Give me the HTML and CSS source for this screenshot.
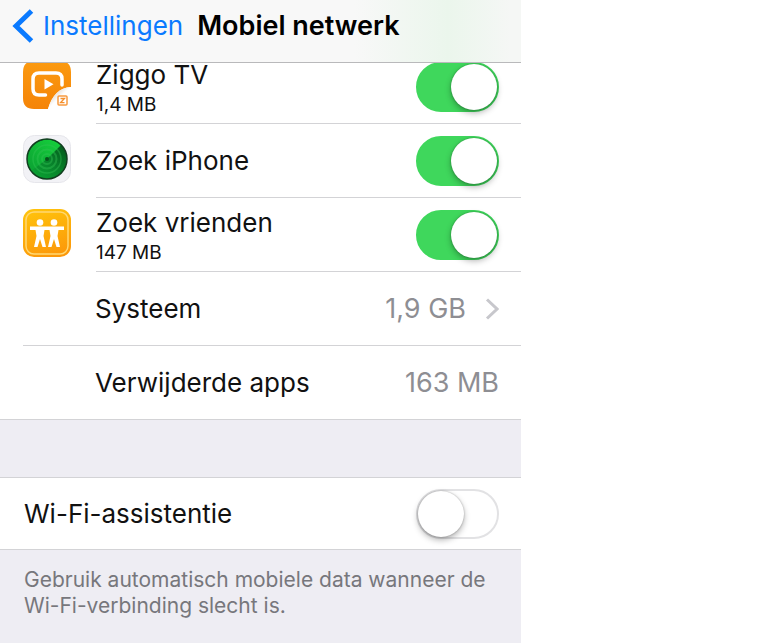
FILE: index.html
```html
<!DOCTYPE html>
<html lang="nl">
<head>
    <meta charset="UTF-8">
    <title>Mobiel netwerk</title>
    <meta name="viewport" content="width=device-width, initial-scale=1.0">
    <link rel="stylesheet" href="styles.css">
</head>
<body>
    <div class="screen">
        <header class="navbar">
            <a class="back" href="#">
                <svg class="back-icon" width="22" height="36" viewBox="0 0 22 36">
                    <path d="M19.500 3L4 18l15.500 15" fill="none" stroke="#0a7aff" stroke-width="5"/>
                </svg>
                Instellingen
            </a>
            <h1>Mobiel netwerk</h1>
        </header>
        <main>
            <ul class="list apps">
                <li class="row">
                    <svg class="icon" width="48" height="48" viewBox="0 0 48 48">
                        <defs>
                            <linearGradient id="ziggo" x1="0" y1="0" x2="0" y2="1">
                                <stop offset="0" stop-color="#fb9a10"/>
                                <stop offset="1" stop-color="#f58408"/>
                            </linearGradient>
                            <linearGradient id="fold" x1="0.200" y1="0.200" x2="0.700" y2="0.700">
                                <stop offset="0" stop-color="#d9cfc6"/>
                                <stop offset="0.600" stop-color="#fff"/>
                            </linearGradient>
                        </defs>
                        <path d="M11 0h26q11 0 11 11v15Q31 27 25 48H11Q0 48 0 37V11Q0 0 11 0z" fill="url(#ziggo)"/>
                        <path d="M48 26Q31 27 25 48h11q12 0 12-12z" fill="url(#fold)"/>
                        <path d="M22.500 34H16q-6 0-6-6V18q0-6 6-6h17q6 0 6 6v6" fill="none" stroke="#fff" stroke-width="3.500" stroke-linecap="round"/>
                        <path d="M21.500 18v10.500l9-5.200z" fill="#fff"/>
                        <rect x="35" y="35" width="9" height="9" rx="1" fill="#fff" stroke="#f79a40" stroke-width="1.500"/>
                        <path d="M37.500 37.500h4l-4 4.200h4" fill="none" stroke="#f58f2c" stroke-width="1.300"/>
                    </svg>
                    <div class="line">
                        <label class="text double" for="ziggo-tv">Ziggo TV<small>1,4 MB</small></label>
                        <input class="switch" type="checkbox" id="ziggo-tv" checked>
                    </div>
                </li>
                <li class="row">
                    <svg class="icon" width="48" height="48" viewBox="0 0 48 48">
                        <defs>
                            <linearGradient id="radar" x1="1" y1="0.200" x2="0.300" y2="1">
                                <stop offset="0" stop-color="#04591c"/>
                                <stop offset="0.500" stop-color="#07802a"/>
                                <stop offset="1" stop-color="#0aa032"/>
                            </linearGradient>
                            <linearGradient id="sweep" x1="0" y1="1" x2="1" y2="0">
                                <stop offset="0" stop-color="#0aa032"/>
                                <stop offset="1" stop-color="#16d23c"/>
                            </linearGradient>
                        </defs>
                        <rect x="0.500" y="0.500" width="47" height="47" rx="11" fill="#f2f2f6" stroke="#e6e6eb"/>
                        <circle cx="24" cy="24" r="20" fill="url(#radar)"/>
                        <path d="M24 24L38 10A20 20 0 0 0 8 36z" fill="url(#sweep)"/>
                        <g fill="none" stroke="#35c455" stroke-opacity="0.400">
                            <circle cx="24" cy="24" r="14" stroke-width="1.500"/>
                            <circle cx="24" cy="24" r="9.500" stroke-width="2"/>
                            <circle cx="24" cy="24" r="5" stroke-width="2"/>
                        </g>
                        <circle cx="24" cy="24" r="2" fill="#05551c"/>
                        <circle cx="24" cy="24" r="20" fill="none" stroke="#123f20" stroke-width="1.500"/>
                    </svg>
                    <div class="line">
                        <label class="text" for="zoek-iphone">Zoek iPhone</label>
                        <input class="switch" type="checkbox" id="zoek-iphone" checked>
                    </div>
                </li>
                <li class="row">
                    <svg class="icon" width="48" height="48" viewBox="0 0 48 48">
                        <defs>
                            <linearGradient id="friends" x1="0.300" y1="0" x2="0.600" y2="1">
                                <stop offset="0" stop-color="#ffc20c"/>
                                <stop offset="1" stop-color="#fc980a"/>
                            </linearGradient>
                        </defs>
                        <rect width="48" height="48" rx="11" fill="url(#friends)"/>
                        <rect x="3" y="3" width="42" height="42" rx="8" fill="none" stroke="#ffd873" stroke-width="1.500"/>
                        <g fill="#fff">
                            <circle cx="17" cy="13.500" r="3.300"/>
                            <circle cx="31" cy="13.500" r="3.300"/>
                            <path d="M7 17.500h34v3.500h-5.500l-1 6L37 38h-3.500L31 30l-2.500 8H25l2.500-11-1-6h-5l-1 6L23 38h-3.500L17 30l-2.500 8H11l2.500-11-1-6H7z"/>
                        </g>
                    </svg>
                    <div class="line">
                        <label class="text double" for="zoek-vrienden">Zoek vrienden<small>147 MB</small></label>
                        <input class="switch" type="checkbox" id="zoek-vrienden" checked>
                    </div>
                </li>
                <li class="row wide">
                    <a class="line" href="#">
                        <span class="text">Systeem</span>
                        <span class="value">1,9 GB</span>
                        <svg class="chevron" width="14" height="24" viewBox="0 0 14 24">
                            <path d="M2 2.500l10 9.500-10 9.500" fill="none" stroke="#c7c7cc" stroke-width="3"/>
                        </svg>
                    </a>
                </li>
                <li class="row last">
                    <div class="line">
                        <span class="text">Verwijderde apps</span>
                        <span class="value">163 MB</span>
                    </div>
                </li>
            </ul>
            <div class="list">
                <div class="row assist">
                    <div class="line">
                        <label class="text" for="wifi-assistentie">Wi-Fi-assistentie</label>
                        <input class="switch" type="checkbox" id="wifi-assistentie">
                    </div>
                </div>
            </div>
            <p class="note">Gebruik automatisch mobiele data wanneer de Wi-Fi-verbinding slecht is.</p>
        </main>
    </div>
</body>
</html>
```

FILE: styles.css
```css
* {
    box-sizing: border-box;
}
body {
    margin: 0;
    background: #fff;
    color: #111;
    font-family: Inter, "Liberation Sans", sans-serif;
    font-size: 26px;
    line-height: 30px;
}
a {
    color: inherit;
    text-decoration: none;
}
.screen {
    max-width: 521px;
    min-height: 100vh;
    background: #eeedf3;
}
.navbar {
    position: sticky;
    top: 0;
    z-index: 1;
    display: flex;
    align-items: center;
    gap: 14px;
    padding: 8px 12px 18px;
    background: linear-gradient(90deg, #f8f8f8 68%, #ebf6ec 86%, #f5f7f5 98%);
    border-bottom: 1px solid #b9b9bb;
}
.back {
    display: flex;
    align-items: center;
    gap: 9px;
    color: #0a7aff;
}
.navbar h1 {
    margin: 0;
    color: #000;
    font-size: 27px;
    font-weight: 600;
}
.list {
    background: #fff;
}
/* the list is scrolled a bit under the navbar */
.apps {
    margin: -13px 0 57px;
    padding: 0;
    list-style: none;
}
.row {
    display: flex;
    align-items: center;
    padding-left: 23px;
}
.icon {
    flex: none;
    margin: 0 25px 4px 0;
}
.line {
    display: flex;
    flex: 1;
    align-items: center;
    height: 74px;
    padding-right: 22px;
    border-bottom: 1px solid #d3d3d6;
}
.text {
    flex: 1;
}
.double {
    padding-top: 4px;
}
.double small {
    display: block;
    padding-top: 2px;
    font-size: 19px;
    line-height: 26px;
}
.wide .line {
    padding-left: 72px;
}
.last {
    padding-left: 0;
}
.last .line {
    padding-left: 95px;
}
.value {
    color: #8e8e93;
    font-size: 27px;
}
.chevron {
    margin-left: 19px;
}
.assist {
    padding-left: 0;
    border-top: 1px solid #d3d3d6;
}
.assist .line {
    height: 72px;
    padding-left: 24px;
}
.switch {
    appearance: none;
    flex: none;
    display: flex;
    width: 83px;
    height: 50px;
    margin: 0;
    padding: 2px;
    border: 2px solid #e2e2e4;
    border-radius: 25px;
    background: #fff;
    cursor: pointer;
}
.switch::before {
    content: "";
    width: 46px;
    height: 46px;
    margin: -2px;
    border-radius: 50%;
    background: #fff;
    box-shadow: 0 3px 6px rgba(0,0,0,0.3), 0 0 2px rgba(0,0,0,0.3);
}
.switch:checked {
    justify-content: flex-end;
    border-color: #3fd75c;
    background: #3fd75c;
}
.note {
    margin: 0;
    padding: 17px 24px;
    color: #77777c;
    font-size: 21px;
    line-height: 26px;
}
@media (max-width: 400px) {
    .navbar {
        gap: 8px;
    }
    .navbar h1 {
        font-size: 21px;
    }
}
```
